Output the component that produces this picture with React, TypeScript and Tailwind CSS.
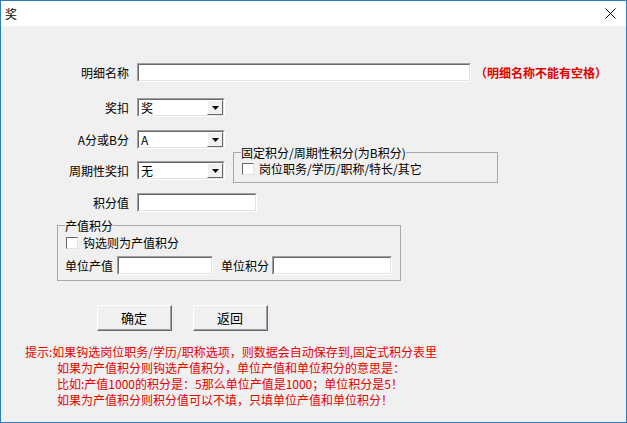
import type { ReactNode } from "react";

const FONT = "font-['Noto_Sans_CJK_SC','Noto_Sans',sans-serif]";

// classic sunken edit frame
function Sunken({ className, children }: { className: string; children?: ReactNode }) {
  return (
    <div className={`border border-t-[#a0a0a0] border-l-[#a0a0a0] border-r-white border-b-white ${className}`}>
      <div className="flex h-full w-full items-center border border-t-[#696969] border-l-[#696969] border-r-[#e3e3e3] border-b-[#e3e3e3] bg-white">
        {children}
      </div>
    </div>
  );
}

function Select({ value }: { value: string }) {
  return (
    <Sunken className="h-[19px] w-[88px]">
      <span className="flex-1 pl-[2px] text-[12px] leading-[14px] text-black">{value}</span>
      <div className="flex h-full w-[16px] items-center justify-center border border-t-white border-l-white border-r-[#696969] border-b-[#696969] bg-[#f0f0f0]">
        <svg width="7" height="4" viewBox="0 0 7 4">
          <path d="M0 0h7L3.5 4z" fill="#000" />
        </svg>
      </div>
    </Sunken>
  );
}

function Check() {
  return <div className="h-[12px] w-[12px] border border-t-[#696969] border-l-[#696969] border-r-[#e3e3e3] border-b-[#e3e3e3] bg-white" />;
}

function Button({ label }: { label: string }) {
  return (
    <div className="h-[26px] w-[75px] border border-t-white border-l-white border-r-[#696969] border-b-[#696969]">
      <div className="flex h-full w-full items-center justify-center border-r border-b border-r-[#a0a0a0] border-b-[#a0a0a0] bg-[#f0f0f0] text-[13px] text-black">
        {label}
      </div>
    </div>
  );
}

function Row({ label, children }: { label: string; children: ReactNode }) {
  return (
    <div className="flex items-center">
      <div className="w-[128px] text-right text-[12px] leading-[14px] text-black">{label}</div>
      <div className="ml-[8px] flex items-center">{children}</div>
    </div>
  );
}

export default function App() {
  return (
    <div className={`flex h-[423px] w-[627px] flex-col border border-[#2d7dc0] bg-[#f0f0f0] ${FONT}`}>
      {/* title bar */}
      <div className="flex h-[25px] items-center justify-between bg-white pl-[4px] pr-[10px]">
        <span className="text-[12px] text-[#111]">奖</span>
        <svg width="11" height="11" viewBox="0 0 11 11">
          <path d="M0.5 0.5l10 10M10.5 0.5l-10 10" stroke="#000" strokeWidth="1" />
        </svg>
      </div>

      <div className="flex flex-col">
        <div className="mt-[37px] flex items-center">
          <Row label="明细名称">
            <Sunken className="h-[19px] w-[334px]" />
          </Row>
          <span className="ml-[4px] text-[12px] font-bold text-[#e00000]">（明细名称不能有空格）</span>
        </div>

        <div className="mt-[16px]">
          <Row label="奖扣">
            <Select value="奖" />
          </Row>
        </div>

        <div className="mt-[13px] flex items-start">
          <div className="flex flex-col">
            <Row label="A分或B分">
              <Select value="A" />
            </Row>
            <div className="mt-[12px]">
              <Row label="周期性奖扣">
                <Select value="无" />
              </Row>
            </div>
          </div>
          <fieldset className="ml-[8px] mt-[16px] w-[265px] border border-[#a8a8a8] px-[7px] pb-[7px]">
            <legend className="text-[12px] leading-[13px] text-black">固定积分/周期性积分(为B积分)</legend>
            <div className="mt-[3px] flex items-center gap-[5px] pl-[1px]">
              <Check />
              <span className="text-[12px] leading-[13px] text-black">岗位职务/学历/职称/特长/其它</span>
            </div>
          </fieldset>
        </div>

        <div className="mt-[10px]">
          <Row label="积分值">
            <Sunken className="h-[19px] w-[120px]" />
          </Row>
        </div>

        <fieldset className="ml-[56px] mt-[7px] w-[344px] border border-[#a8a8a8] px-[7px] pb-[5px]">
          <legend className="text-[12px] leading-[13px] text-black">产值积分</legend>
          <div className="mt-[4px] flex items-center gap-[5px] pl-[1px]">
            <Check />
            <span className="text-[12px] leading-[13px] text-black">钩选则为产值积分</span>
          </div>
          <div className="mt-[7px] flex items-center text-[12px] text-black">
            <span>单位产值</span>
            <Sunken className="ml-[4px] h-[19px] w-[96px]" />
            <span className="ml-[8px]">单位积分</span>
            <Sunken className="ml-[3px] h-[19px] w-[120px]" />
          </div>
        </fieldset>

        <div className="ml-[96px] mt-[24px] flex gap-[21px]">
          <Button label="确定" />
          <Button label="返回" />
        </div>

        {/* hint */}
        <div className="ml-[24px] mt-[13px] flex flex-col text-[12px] leading-[16px] text-[#e60000]">
          <span>提示:如果钩选岗位职务/学历/职称选项，则数据会自动保存到,固定式积分表里</span>
          <span className="pl-[32px]">如果为产值积分则钩选产值积分，单位产值和单位积分的意思是：</span>
          <span className="pl-[32px]">比如:产值1000的积分是：5那么单位产值是1000；单位积分是5！</span>
          <span className="pl-[32px]">如果为产值积分则积分值可以不填，只填单位产值和单位积分！</span>
        </div>
      </div>
    </div>
  );
}
